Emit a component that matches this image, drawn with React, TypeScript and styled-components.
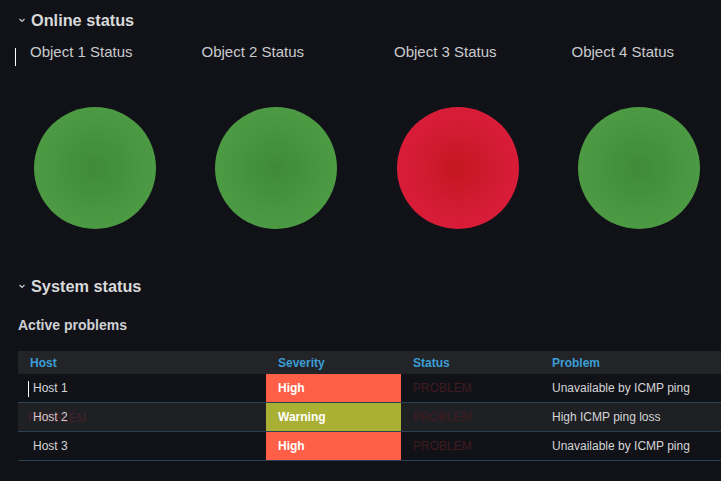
import styled, { createGlobalStyle } from 'styled-components';

const GlobalStyle = createGlobalStyle`
  html, body {
    margin: 0;
    padding: 0;
    background: #111217;
  }
  body {
    font-family: "Liberation Sans", Arial, Helvetica, sans-serif;
    color: #d8d9da;
    overflow: hidden;
  }
`;

const Page = styled.div`
  width: 721px;
  height: 481px;
  overflow: hidden;
  background: #111217;
`;

const SectionHeader = styled.div`
  height: 40px;
  display: flex;
  align-items: center;
  gap: 4px;
  padding-left: 17px;
`;

const SectionTitle = styled.span`
  font-size: 16.3px;
  font-weight: 700;
  color: #d8d9da;
`;

const PanelRow = styled.div`
  display: grid;
  grid-template-columns: repeat(4, 181.5px);
  height: 226px;
  padding-left: 4px;
`;

const Panel = styled.div`
  position: relative;
  display: flex;
  flex-direction: column;
  align-items: center;
`;

const PanelTitle = styled.div<{ $offset: number }>`
  align-self: stretch;
  padding-left: ${(p) => p.$offset}px;
  line-height: 24px;
  font-size: 15px;
  color: #c9cacd;
  white-space: nowrap;
`;

const StatusCircle = styled.div<{ $ok: boolean }>`
  margin-top: 43px;
  width: 122px;
  height: 122px;
  border-radius: 50%;
  background: ${(p) =>
    p.$ok
      ? 'radial-gradient(circle, #3e8a39 0%, #47953f 45%, #53a048 100%)'
      : 'radial-gradient(circle, #c4171f 0%, #d21b33 45%, #e11e3e 100%)'};
`;

const Caret = styled.span<{ $left: number; $top: number; $h: number }>`
  position: absolute;
  left: ${(p) => p.$left}px;
  top: ${(p) => p.$top}px;
  width: 1px;
  height: ${(p) => p.$h}px;
  background: #ffffff;
`;

const SubTitle = styled.div`
  margin: 7px 0 14px 18px;
  line-height: 24px;
  font-size: 14px;
  font-weight: 700;
  color: #d0d1d5;
`;

const Table = styled.div`
  margin-left: 18px;
  width: 760px;
`;

const Row = styled.div<{ $head?: boolean; $alt?: boolean }>`
  display: grid;
  grid-template-columns: 248px 135px 139px 1fr;
  height: ${(p) => (p.$head ? '23px' : '28px')};
  background: ${(p) => (p.$head ? '#232428' : p.$alt ? '#1f2024' : 'transparent')};
  border-bottom: ${(p) => (p.$head ? 'none' : '1px solid #2a4352')};
`;

const HeadCell = styled.div`
  display: flex;
  align-items: center;
  padding-left: 12px;
  padding-top: 1px;
  font-size: 12px;
  font-weight: 700;
  color: #3b9ed6;
`;

const Cell = styled.div<{ $pad?: number }>`
  position: relative;
  display: flex;
  align-items: center;
  padding-left: ${(p) => p.$pad ?? 12}px;
  font-size: 12px;
  color: #d4d5d8;
  white-space: nowrap;
`;

const SeverityCell = styled(Cell)<{ $level: 'High' | 'Warning' }>`
  background: ${(p) => (p.$level === 'High' ? '#ff5f47' : '#a9b033')};
  color: #ffffff;
  font-weight: 700;
`;

const StatusText = styled(Cell)`
  color: #401b20;
`;

const Ghost = styled.span`
  position: absolute;
  left: 10px;
  top: 8px;
  color: rgba(200, 40, 55, 0.22);
  pointer-events: none;
`;

const Chevron = () => (
  <svg width="10" height="10" viewBox="0 0 10 10">
    <path d="M2.5 4 L5 6.5 L7.5 4" fill="none" stroke="#c9cacd" strokeWidth="1.2" />
  </svg>
);

const objects = [
  { name: 'Object 1 Status', offset: 26, ok: true },
  { name: 'Object 2 Status', offset: 16, ok: true },
  { name: 'Object 3 Status', offset: 27, ok: false },
  { name: 'Object 4 Status', offset: 23, ok: true },
];

const problems: { host: string; severity: 'High' | 'Warning'; problem: string }[] = [
  { host: 'Host 1', severity: 'High', problem: 'Unavailable by ICMP ping' },
  { host: 'Host 2', severity: 'Warning', problem: 'High ICMP ping loss' },
  { host: 'Host 3', severity: 'High', problem: 'Unavailable by ICMP ping' },
];

export default function App() {
  return (
    <Page>
      <GlobalStyle />
      <SectionHeader>
        <Chevron />
        <SectionTitle>Online status</SectionTitle>
      </SectionHeader>
      <PanelRow>
        {objects.map((o, i) => (
          <Panel key={o.name}>
            {i === 0 && <Caret $left={11} $top={8} $h={18} />}
            <PanelTitle $offset={o.offset}>{o.name}</PanelTitle>
            <StatusCircle $ok={o.ok} />
          </Panel>
        ))}
      </PanelRow>
      <SectionHeader>
        <Chevron />
        <SectionTitle>System status</SectionTitle>
      </SectionHeader>
      <SubTitle>Active problems</SubTitle>
      <Table>
        <Row $head>
          <HeadCell>Host</HeadCell>
          <HeadCell>Severity</HeadCell>
          <HeadCell>Status</HeadCell>
          <HeadCell>Problem</HeadCell>
        </Row>
        {problems.map((p, i) => (
          <Row key={p.host} $alt={i === 1}>
            <Cell $pad={15}>
              {i === 0 && <Caret $left={10} $top={7} $h={16} />}
              {i === 1 && <Ghost>PROBLEM</Ghost>}
              {p.host}
            </Cell>
            <SeverityCell $level={p.severity}>{p.severity}</SeverityCell>
            <StatusText>PROBLEM</StatusText>
            <Cell>{p.problem}</Cell>
          </Row>
        ))}
      </Table>
    </Page>
  );
}
